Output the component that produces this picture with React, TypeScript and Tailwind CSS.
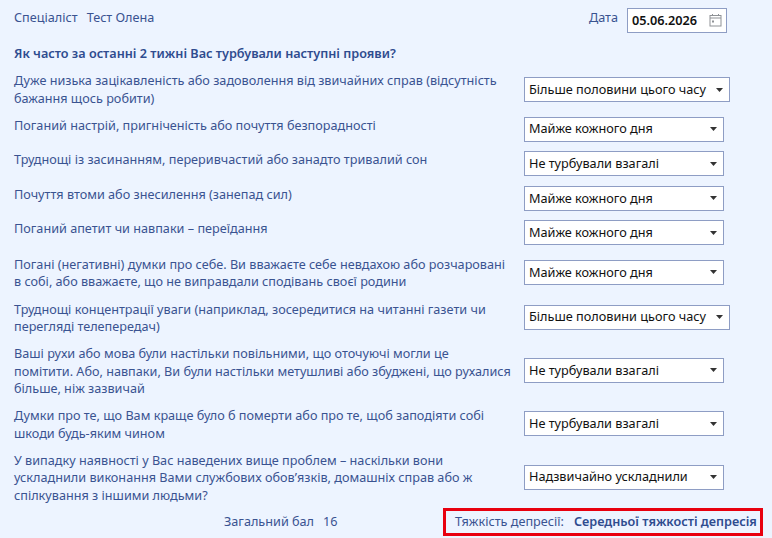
import React from 'react';

interface Question {
  text: string;
  answer: string;
  wide?: boolean;
  multi?: boolean;
}

const questions: Question[] = [
  { text: 'Дуже низька зацікавленість або задоволення від звичайних справ (відсутність\nбажання щось робити)', answer: 'Більше половини цього часу', wide: true, multi: true },
  { text: 'Поганий настрій, пригніченість або почуття безпорадності', answer: 'Майже кожного дня' },
  { text: 'Труднощі із засинанням, переривчастий або занадто тривалий сон', answer: 'Не турбували взагалі' },
  { text: 'Почуття втоми або знесилення (занепад сил)', answer: 'Майже кожного дня' },
  { text: 'Поганий апетит чи навпаки – переїдання', answer: 'Майже кожного дня' },
  { text: 'Погані (негативні) думки про себе. Ви вважаєте себе невдахою або розчаровані\nв собі, або вважаєте, що не виправдали сподівань своєї родини', answer: 'Майже кожного дня', multi: true },
  { text: 'Труднощі концентрації уваги (наприклад, зосередитися на читанні газети чи\nперегляді телепередач)', answer: 'Більше половини цього часу', wide: true, multi: true },
  { text: 'Ваші рухи або мова були настільки повільними, що оточуючі могли це\nпомітити. Або, навпаки, Ви були настільки метушливі або збуджені, що рухалися\nбільше, ніж зазвичай', answer: 'Не турбували взагалі', multi: true },
  { text: 'Думки про те, що Вам краще було б померти або про те, щоб заподіяти собі\nшкоди будь-яким чином', answer: 'Не турбували взагалі', multi: true },
  { text: 'У випадку наявності у Вас наведених вище проблем – наскільки вони\nускладнили виконання Вами службових обов’язків, домашніх справ або ж\nспілкування з іншими людьми?', answer: 'Надзвичайно ускладнили', multi: true },
];

const SelectBox: React.FC<{ value: string; wide?: boolean }> = ({ value, wide }) => (
  <div className={`flex h-[25px] items-center justify-between border border-[#8e9dc4] bg-white pl-[4px] pr-[6px] text-[12.7px] text-[#111111] ${wide ? 'w-[206px]' : 'w-[200px]'}`}>
    <span className="whitespace-nowrap">{value}</span>
    <svg width="7" height="4" viewBox="0 0 7 4"><path d="M0 0h7L3.5 4z" fill="#333" /></svg>
  </div>
);

export default function App() {
  return (
    <div className="h-[538px] w-[772px] overflow-hidden bg-[#edf4ff] pl-[14px] pr-[9px] font-['Noto_Sans',sans-serif] text-[12.66px] leading-[17.5px] text-[#3a5391]">
      <div className="flex h-[45px] w-[713px] items-start justify-between pt-[8px]">
        <div className="flex gap-[9px] pt-px">
          <span>Спеціаліст</span>
          <span>Тест Олена</span>
        </div>
        <div className="flex items-start gap-[9px]">
          <span className="pt-px">Дата</span>
          <div className="flex h-[25px] w-[100px] items-center justify-between border border-[#8e9dc4] bg-white pl-[4px] pr-[4px] text-[12.7px] font-semibold text-[#111111]">
            <span>05.06.2026</span>
            <svg width="13" height="13" viewBox="0 0 13 13" fill="none" stroke="#8f9296">
              <rect x="1" y="1.5" width="11" height="10.5" />
              <path d="M1 4h11M3.5 0v2M9.5 0v2" />
              <rect x="3" y="6.5" width="2" height="2" fill="#8f9296" stroke="none" />
            </svg>
          </div>
        </div>
      </div>

      <div className="mb-[9.5px] font-semibold text-[#2f4c8f]">Як часто за останні 2 тижні Вас турбували наступні прояви?</div>

      <div className="flex w-[716px] flex-col gap-[9.6px]">
        {questions.map((q, i) => (
          <div key={q.text} className="flex items-center justify-between">
            {/* multi-line rows after the first sit 1px lower than the centred select */}
            <div className={`w-[502px] whitespace-pre-line ${q.multi ? '' : 'self-start'} ${q.multi && i > 0 ? '-mb-px pt-px' : ''}`}>{q.text}</div>
            <div className="w-[206px] shrink-0">
              <SelectBox value={q.answer} wide={q.wide} />
            </div>
          </div>
        ))}
      </div>

      <div className="mt-[4.5px] flex items-center">
        <div className="flex w-[429px] gap-[9px] pl-[210px]">
          <span>Загальний бал</span>
          <span>16</span>
        </div>
        <div className="flex h-[28px] w-[320px] items-center gap-[10px] border-[3px] border-[#e8000f] pl-[9px]">
          <span className="whitespace-nowrap">Тяжкість депресії:</span>
          <span className="whitespace-nowrap font-semibold text-[#2f4c8f]">Середньої тяжкості депресія</span>
        </div>
      </div>
    </div>
  );
}
